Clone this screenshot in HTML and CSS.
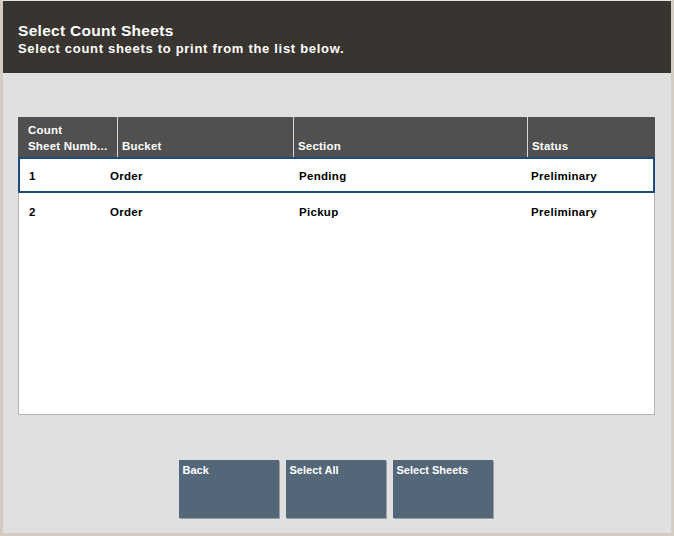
FILE: index.html
```html
<!DOCTYPE html>
<html>
<head>
<meta charset="utf-8">
<link rel="stylesheet" href="styles.css">
</head>
<body>
<div class="frame">
  <header class="topbar">
    <div class="title">Select Count Sheets</div>
    <div class="subtitle">Select count sheets to print from the list below.</div>
  </header>
  <main class="content">
    <div class="table">
      <div class="thead">
        <div class="th th-first">Count<br>Sheet Numb...</div>
        <div class="th">Bucket</div>
        <div class="th">Section</div>
        <div class="th">Status</div>
      </div>
      <div class="tbody">
        <div class="row selected">
          <div>1</div><div>Order</div><div>Pending</div><div>Preliminary</div>
        </div>
        <div class="row">
          <div>2</div><div>Order</div><div>Pickup</div><div>Preliminary</div>
        </div>
      </div>
    </div>
    <div class="actions">
      <button class="btn">Back</button>
      <button class="btn">Select All</button>
      <button class="btn">Select Sheets</button>
    </div>
  </main>
</div>
</body>
</html>
```

FILE: styles.css
```css
* { box-sizing: border-box; }
html, body { margin: 0; padding: 0; }
body {
  font-family: "Liberation Sans", Arial, sans-serif;
  font-weight: bold;
  background: #e0e0e0;
}
.frame {
  width: 674px;
  height: 536px;
  background: #e0e0e0;
  border-top: 1px solid #e6e2de;
  border-left: 3px solid #d4cbc3;
  border-right: 3px solid #d4cbc3;
  border-bottom: 3px solid #d4cbc3;
  display: flex;
  flex-direction: column;
}
.topbar {
  height: 72px;
  background: #383430;
  color: #ffffff;
  padding: 21px 0 0 15px;
}
.title {
  font-size: 15.5px;
  line-height: 18px;
  letter-spacing: 0.3px;
}
.subtitle {
  font-size: 13px;
  line-height: 17px;
  letter-spacing: 0.7px;
}
.content {
  padding: 44px 16px 0 15px;
}
.table {
  width: 637px;
}
.thead {
  display: grid;
  grid-template-columns: 99px 175px 233px 127px;
  column-gap: 1px;
  background: #d8d8d8;
  height: 40px;
}
.th {
  background: #505050;
  color: #ffffff;
  font-size: 11.5px;
  line-height: 16px;
  letter-spacing: 0.2px;
  padding: 4px 4px 3px 4px;
  display: flex;
  align-items: flex-end;
}
.th-first { padding-left: 10px; }
.tbody {
  height: 258px;
  background: #ffffff;
  border: 1px solid #b4b4b4;
  border-top: none;
}
.row {
  display: grid;
  grid-template-columns: 81px 189px 232px 1fr;
  padding-left: 9px;
  height: 36px;
  align-items: center;
  font-size: 11.5px;
  letter-spacing: 0.3px;
  color: #000000;
  border: 2px solid transparent;
  margin: 0 -1px;
  padding-top: 1px;
}
.row.selected {
  border-color: #1e4c7a;
}
.actions {
  display: flex;
  justify-content: center;
  gap: 7px;
  margin-top: 45px;
  padding-right: 2px;
}
.btn {
  width: 100px;
  height: 58px;
  background: #546779;
  color: #ffffff;
  border: none;
  box-shadow: 1px 1px 0 #9aa0a6;
  font-family: "Liberation Sans", Arial, sans-serif;
  font-weight: bold;
  font-size: 11px;
  text-align: left;
  padding: 4px 4px;
  display: flex;
  align-items: flex-start;
}
```
